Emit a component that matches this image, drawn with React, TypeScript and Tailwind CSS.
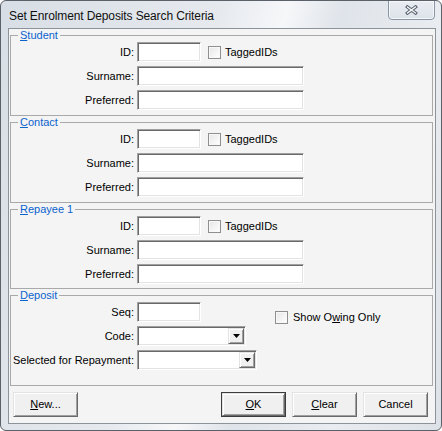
import React from "react";

const sunken =
  "bg-white border border-t-[#a0a0a0] border-l-[#a0a0a0] border-r-white border-b-white shadow-[inset_1px_1px_0_#696969,inset_-1px_-1px_0_#e3e3e3]";
const raised =
  "bg-[#f0f0f0] border border-t-[#e3e3e3] border-l-[#e3e3e3] border-r-[#696969] border-b-[#696969] shadow-[inset_1px_1px_0_#ffffff,inset_-1px_-1px_0_#a0a0a0]";

function TextBox({ className }: { className: string }) {
  return <div className={`h-[20px] ${sunken} ${className}`} />;
}

function CheckBox() {
  return (
    <div className="w-[13px] h-[13px] border border-[#8e8f8f] bg-[linear-gradient(135deg,#e6e6e6,#ffffff)] shadow-[inset_0_0_0_1px_#f8f8f8]" />
  );
}

function Combo({ className }: { className: string }) {
  return (
    <div className={`h-[20px] p-[1px] flex justify-end ${sunken} ${className}`}>
      <div className={`w-[16px] h-full flex items-center justify-center ${raised}`}>
        <svg width="7" height="4" viewBox="0 0 7 4">
          <polygon points="0,0 7,0 3.5,4" fill="#000" />
        </svg>
      </div>
    </div>
  );
}

function Row({ label, children }: { label: React.ReactNode; children: React.ReactNode }) {
  return (
    <div className="flex items-center h-[20px] gap-[3px]">
      <span className="w-[123px] text-right whitespace-nowrap">{label}</span>
      {children}
    </div>
  );
}

function PersonGroup({
  title,
  extra,
}: {
  title: React.ReactNode;
  extra: string;
}) {
  return (
    <fieldset className={`ml-[1px] w-[423px] border border-[#a9a9a9] ${extra}`}>
      <legend className="ml-[7px] px-[2px] leading-[13px] text-[#0b63ce]">{title}</legend>
      <div className="flex flex-col gap-[4px]">
        <Row label="ID:">
          <TextBox className="w-[64px]" />
          <div className="ml-[4px] flex items-center gap-[4px]">
            <CheckBox />
            <span>TaggedIDs</span>
          </div>
        </Row>
        <Row label="Surname:">
          <TextBox className="w-[167px]" />
        </Row>
        <Row label="Preferred:">
          <TextBox className="w-[167px]" />
        </Row>
      </div>
    </fieldset>
  );
}

function PushButton({ children, isDefault }: { children: React.ReactNode; isDefault?: boolean }) {
  if (isDefault) {
    return (
      <div className="w-[65px] h-[25px] border border-[#3c3c3c]">
        <div className={`w-full h-full flex items-center justify-center ${raised}`}>{children}</div>
      </div>
    );
  }
  return (
    <div className={`w-[65px] h-[25px] flex items-center justify-center ${raised}`}>{children}</div>
  );
}

export default function App() {
  return (
    <div className="w-[442px] h-[431px] rounded-[6px] border border-[#5b6168] bg-[linear-gradient(105deg,#d8dee5_0%,#e6eaef_40%,#f6f7f9_52%,#dfe4ea_62%,#e9ecf0_80%,#dde2e8_100%)] flex flex-col font-['Liberation_Sans',Arial,sans-serif] text-[11px] text-black overflow-hidden">
      {/* title bar */}
      <div className="h-[27px] flex justify-between items-start pl-[8px] pr-[6px]">
        <span className="pt-[8px] leading-[14px] text-[12px] tracking-[-0.12px] text-[#101010]">
          Set Enrolment Deposits Search Criteria
        </span>
        <div className="-mt-[1px] w-[47px] h-[20px] rounded-b-[4px] border border-[#8a96a4] bg-[linear-gradient(#e9edf2,#dde3ea)] shadow-[inset_0_0_0_1px_#f5f7f9] flex items-center justify-center">
          <svg width="13" height="10" viewBox="0 0 13 10">
            <path d="M2.5 2 L10.5 8 M10.5 2 L2.5 8" stroke="#56606c" strokeWidth="3.4" strokeLinecap="square" />
            <path d="M2.5 2 L10.5 8 M10.5 2 L2.5 8" stroke="#f4f6f8" strokeWidth="1.3" strokeLinecap="square" />
          </svg>
        </div>
      </div>

      {/* client area */}
      <div className="ml-[7px] w-[428px] h-[396px] border border-[#8c939b] bg-[#f4f4f4] flex flex-col">
        <PersonGroup
          title={
            <>
              <span className="underline">S</span>tudent
            </>
          }
          extra="pb-[5px]"
        />
        <PersonGroup
          title={
            <>
              <span className="underline">C</span>ontact
            </>
          }
          extra="pb-[5px]"
        />
        <PersonGroup
          title={
            <>
              <span className="underline">R</span>epayee 1
            </>
          }
          extra="pb-[4px]"
        />

        <fieldset className="ml-[1px] w-[423px] border border-[#a9a9a9] pb-[15px]">
          <legend className="ml-[7px] px-[2px] leading-[13px] text-[#0b63ce]">
            <span className="underline">D</span>eposit
          </legend>
          <div className="flex flex-col gap-[4px]">
            <div className="flex items-start h-[20px]">
              <Row label="Seq:">
                <TextBox className="w-[64px]" />
              </Row>
              <div className="ml-[74px] mt-[7px] flex items-center gap-[5px]">
                <CheckBox />
                <span>
                  Show O<span className="underline">w</span>ing Only
                </span>
              </div>
            </div>
            <Row label="Code:">
              <Combo className="w-[109px]" />
            </Row>
            <Row label="Selected for Repayment:">
              <Combo className="w-[120px]" />
            </Row>
          </div>
        </fieldset>

        <div className="mt-[6px] pl-[4px] pr-[7px] flex">
          <PushButton>
            <span>
              <span className="underline">N</span>ew...
            </span>
          </PushButton>
          <div className="ml-auto flex gap-[6px]">
            <PushButton isDefault>
              <span>
                <span className="underline">O</span>K
              </span>
            </PushButton>
            <PushButton>
              <span>
                <span className="underline">C</span>lear
              </span>
            </PushButton>
            <PushButton>Cancel</PushButton>
          </div>
        </div>
      </div>
    </div>
  );
}
